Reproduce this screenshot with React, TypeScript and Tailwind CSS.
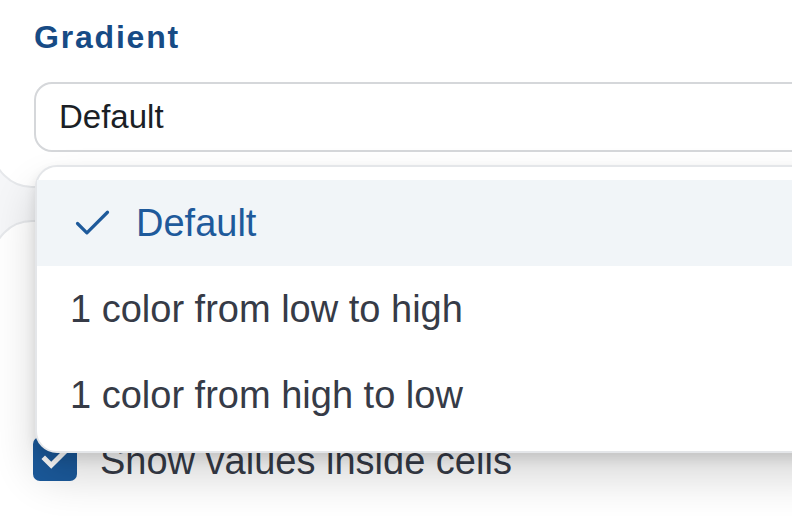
import React from "react";
import { Check } from "lucide-react";

export default function App() {
  return (
    <div className="relative w-[792px] h-[516px] overflow-hidden bg-[#f5f6f8] font-['Liberation_Sans','Helvetica',Arial,sans-serif]">
      {/* Card A */}
      <div className="-ml-[8px] -mt-[4px] w-[900px] bg-white border-2 border-[#e6e8eb] rounded-bl-[40px] pl-[40px] pt-[23px] pb-[34px]">
        <h2 className="text-[32px] leading-none font-bold tracking-[1.8px] text-[#174b85]">Gradient</h2>
        <div className="mt-[29px] w-[820px] h-[70px] border-2 border-[#d5d7da] rounded-[18px] bg-white flex items-center pl-[23px]">
          <span className="text-[33px] text-[#1b1f26]">Default</span>
        </div>
      </div>

      {/* Card B */}
      <div className="mt-[32px] -ml-[8px] w-[900px] h-[400px] bg-white border-2 border-[#e6e8eb] rounded-tl-[40px] pl-[39px] pt-[215px]">
        <div className="flex items-center gap-[23px]">
          <div className="w-[44px] h-[44px] rounded-[7px] bg-[#1b5a9c] flex items-center justify-center">
            <svg width="30" height="30" viewBox="0 0 24 24" fill="none" stroke="white" strokeWidth="4" strokeLinecap="square" strokeLinejoin="miter">
              <path d="M4 12l5 5L20 6" />
            </svg>
          </div>
          <span className="text-[38px] leading-none text-[#363b47] mt-[4px]">Show values inside cells</span>
        </div>
      </div>

      {/* Dropdown menu overlay */}
      <div className="absolute left-[35px] top-[165px] w-[820px] bg-white border-2 border-[#e4e6e9] rounded-[22px] pt-[13px] pb-[13px] shadow-[0_24px_44px_rgba(0,0,0,0.16),0_6px_12px_rgba(0,0,0,0.1)] z-10">
        <div className="h-[86px] bg-[#f1f5f8] flex items-center pl-[33px] gap-[21px]">
          <Check size={45} strokeWidth={1.7} color="#1e5a9b" />
          <span className="text-[38px] text-[#1e5a9b]">Default</span>
        </div>
        <div className="h-[86px] flex items-center pl-[33px]">
          <span className="text-[38px] text-[#363b47]">1 color from low to high</span>
        </div>
        <div className="h-[86px] flex items-center pl-[33px]">
          <span className="text-[38px] text-[#363b47]">1 color from high to low</span>
        </div>
      </div>
    </div>
  );
}
